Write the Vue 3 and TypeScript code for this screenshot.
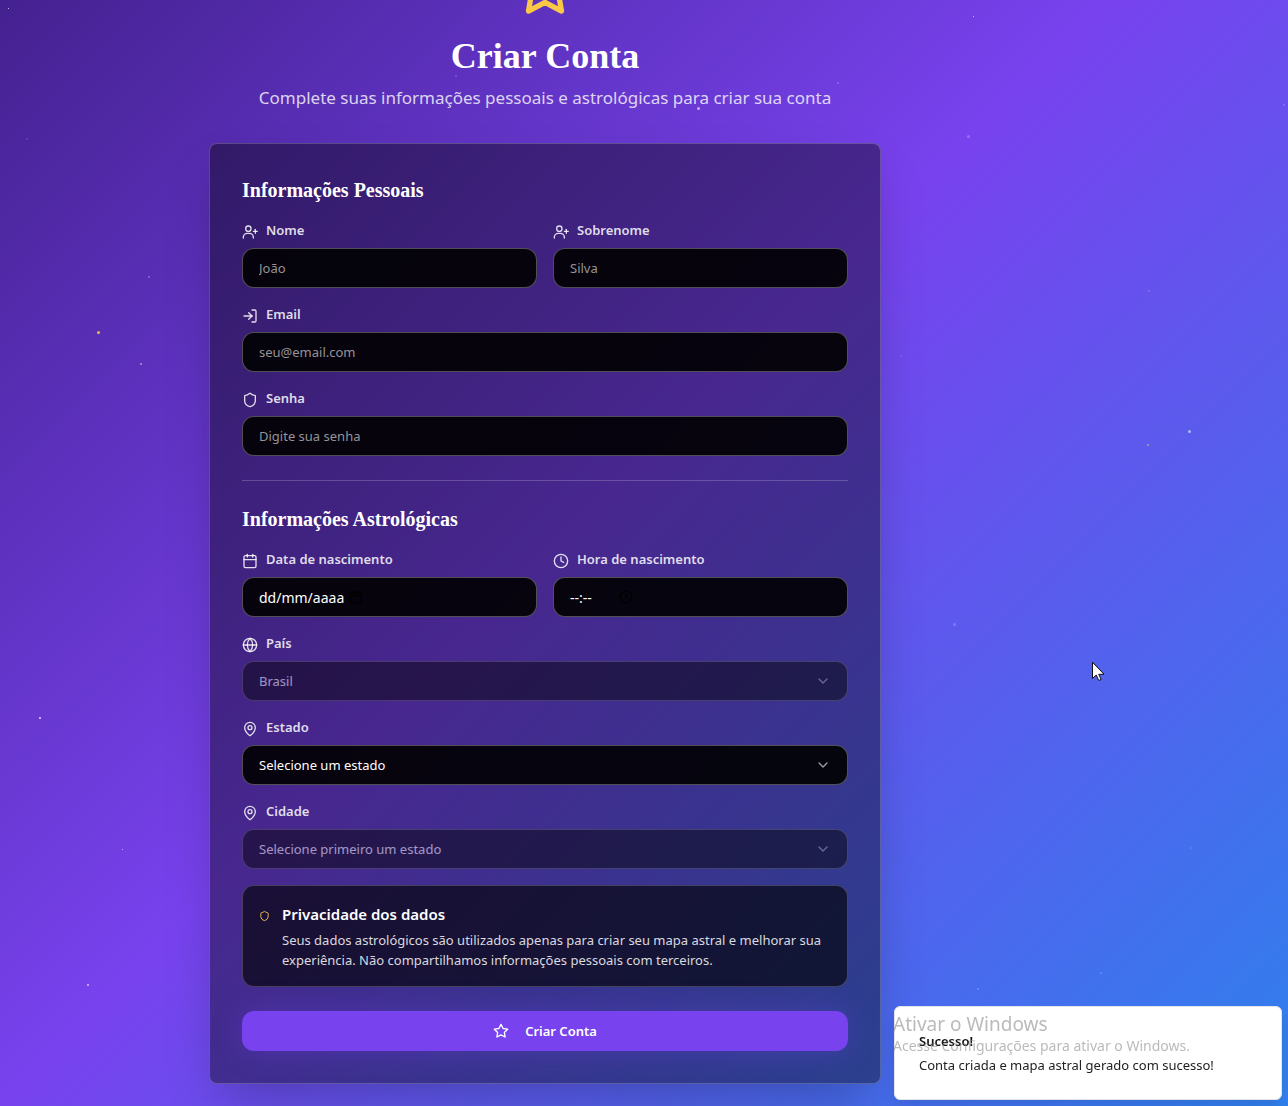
<script setup lang="ts">
import { reactive } from 'vue'

interface Star {
  x: number
  y: number
  size: number
  opacity: number
  gold?: boolean
}

type IconName =
  | 'userPlus'
  | 'logIn'
  | 'shield'
  | 'calendar'
  | 'clock'
  | 'globe'
  | 'pin'

interface Field {
  id: string
  label: string
  icon: IconName
  kind: 'text' | 'email' | 'password' | 'date' | 'time' | 'select'
  placeholder: string
  half?: boolean
  disabled?: boolean
}

const stars: Star[] = [
  { x: 8, y: 8, size: 1, opacity: 0.9 },
  { x: 26, y: 138, size: 2, opacity: 0.15 },
  { x: 148, y: 276, size: 2, opacity: 0.3 },
  { x: 97, y: 331, size: 3, opacity: 0.9, gold: true },
  { x: 140, y: 363, size: 2, opacity: 0.5 },
  { x: 39, y: 717, size: 2, opacity: 0.8 },
  { x: 122, y: 849, size: 1, opacity: 0.7 },
  { x: 87, y: 984, size: 2, opacity: 0.7 },
  { x: 455, y: 75, size: 2, opacity: 0.2 },
  { x: 697, y: 107, size: 3, opacity: 0.6 },
  { x: 837, y: 82, size: 2, opacity: 0.2 },
  { x: 973, y: 16, size: 1, opacity: 0.8 },
  { x: 967, y: 135, size: 3, opacity: 0.25 },
  { x: 1283, y: 104, size: 2, opacity: 0.2 },
  { x: 1148, y: 290, size: 2, opacity: 0.2 },
  { x: 900, y: 355, size: 2, opacity: 0.15 },
  { x: 1188, y: 430, size: 3, opacity: 0.55 },
  { x: 1147, y: 444, size: 2, opacity: 0.6, gold: true },
  { x: 953, y: 623, size: 3, opacity: 0.2 },
  { x: 1190, y: 847, size: 2, opacity: 0.12 },
  { x: 1100, y: 972, size: 2, opacity: 0.2 },
  { x: 977, y: 988, size: 2, opacity: 0.25 },
]

const icons: Record<IconName, string[]> = {
  userPlus: ['M2 21v-1a6 6 0 0 1 6-6h3a6 6 0 0 1 6 6v1', 'M13.500 7a4 4 0 1 1-8 0a4 4 0 1 1 8 0', 'M20 8v6', 'M23 11h-6'],
  logIn: ['M15 3h4a2 2 0 0 1 2 2v14a2 2 0 0 1-2 2h-4', 'M10 17l5-5l-5-5', 'M15 12H3'],
  shield: [
    'M20 13c0 5-3.5 7.5-7.66 8.95a1 1 0 0 1-.67-.01C7.5 20.5 4 18 4 13V6a1 1 0 0 1 1-1c2 0 4.5-1.2 6.24-2.72a1.17 1.17 0 0 1 1.52 0C14.51 3.81 17 5 19 5a1 1 0 0 1 1 1z',
  ],
  calendar: ['M8 2v4', 'M16 2v4', 'M5 4h14a2 2 0 0 1 2 2v14a2 2 0 0 1-2 2H5a2 2 0 0 1-2-2V6a2 2 0 0 1 2-2z', 'M3 10h18'],
  clock: ['M22 12a10 10 0 1 1-20 0a10 10 0 1 1 20 0', 'M12 6v6l4 2'],
  globe: ['M22 12a10 10 0 1 1-20 0a10 10 0 1 1 20 0', 'M12 2a14.5 14.5 0 0 0 0 20a14.5 14.5 0 0 0 0-20', 'M2 12h20'],
  pin: [
    'M20 10c0 4.993-5.539 10.193-7.399 11.799a1 1 0 0 1-1.202 0C9.539 20.193 4 14.993 4 10a8 8 0 0 1 16 0',
    'M15 10a3 3 0 1 1-6 0a3 3 0 1 1 6 0',
  ],
}

const starPath =
  'M12 2l3.090 6.260L22 9.270l-5 4.870l1.180 6.880L12 17.770l-6.180 3.250L7 14.140L2 9.270l6.910-1.010z'

const personal: Field[] = [
  { id: 'nome', label: 'Nome', icon: 'userPlus', kind: 'text', placeholder: 'João', half: true },
  { id: 'sobrenome', label: 'Sobrenome', icon: 'userPlus', kind: 'text', placeholder: 'Silva', half: true },
  { id: 'email', label: 'Email', icon: 'logIn', kind: 'email', placeholder: 'seu@email.com' },
  { id: 'senha', label: 'Senha', icon: 'shield', kind: 'password', placeholder: 'Digite sua senha' },
]

const astro: Field[] = [
  { id: 'data', label: 'Data de nascimento', icon: 'calendar', kind: 'date', placeholder: 'dd/mm/aaaa', half: true },
  { id: 'hora', label: 'Hora de nascimento', icon: 'clock', kind: 'time', placeholder: '--:--', half: true },
  { id: 'pais', label: 'País', icon: 'globe', kind: 'select', placeholder: 'Brasil', disabled: true },
  { id: 'estado', label: 'Estado', icon: 'pin', kind: 'select', placeholder: 'Selecione um estado' },
  { id: 'cidade', label: 'Cidade', icon: 'pin', kind: 'select', placeholder: 'Selecione primeiro um estado', disabled: true },
]

const sections = [
  { title: 'Informações Pessoais', fields: personal },
  { title: 'Informações Astrológicas', fields: astro },
]

const form = reactive<Record<string, string>>({
  nome: '',
  sobrenome: '',
  email: '',
  senha: '',
  data: '',
  hora: '',
  pais: '',
  estado: '',
  cidade: '',
})

function isPicker(field: Field): boolean {
  return field.kind === 'date' || field.kind === 'time'
}

function inputType(field: Field): string {
  return isPicker(field) ? 'text' : field.kind
}
</script>

<template>
  <div class="page">
    <div class="sky" aria-hidden="true">
      <span
        v-for="(s, i) in stars"
        :key="i"
        class="dot"
        :class="{ gold: s.gold }"
        :style="{ left: s.x + 'px', top: s.y + 'px', width: s.size + 'px', height: s.size + 'px', opacity: s.opacity }"
      />
    </div>

    <main class="content">
      <header class="header">
        <svg class="logo" viewBox="0 0 24 24"><path :d="starPath" /></svg>
        <h1>Criar Conta</h1>
        <p>Complete suas informações pessoais e astrológicas para criar sua conta</p>
      </header>

      <form class="card" @submit.prevent>
        <section v-for="sec in sections" :key="sec.title" class="section">
          <h2>{{ sec.title }}</h2>
          <div class="grid">
            <div v-for="f in sec.fields" :key="f.id" class="field" :class="{ half: f.half }">
              <label :for="f.id">
                <svg class="icon" viewBox="0 0 24 24"><path v-for="d in icons[f.icon]" :key="d" :d="d" /></svg>
                {{ f.label }}
              </label>
              <div v-if="f.kind === 'select'" class="control" :class="{ disabled: f.disabled }">
                <select :id="f.id" v-model="form[f.id]" :disabled="f.disabled">
                  <option value="">{{ f.placeholder }}</option>
                </select>
                <svg class="chevron" viewBox="0 0 24 24"><path d="M6 9l6 6l6-6" /></svg>
              </div>
              <div v-else class="control" :class="f.kind">
                <input
                  :id="f.id"
                  v-model="form[f.id]"
                  :type="inputType(f)"
                  :placeholder="f.placeholder"
                  :class="{ picker: isPicker(f) }"
                />
                <svg v-if="isPicker(f)" class="picker-icon" viewBox="0 0 24 24">
                  <path v-for="d in icons[f.icon]" :key="d" :d="d" />
                  <path v-if="f.kind === 'date'" d="M3 7h18" />
                </svg>
              </div>
            </div>
          </div>
        </section>

        <aside class="privacy">
          <svg class="privacy-icon" viewBox="0 0 24 24"><path :d="icons.shield[0]" /></svg>
          <div>
            <h3>Privacidade dos dados</h3>
            <p>
              Seus dados astrológicos são utilizados apenas para criar seu mapa astral e melhorar sua
              experiência. Não compartilhamos informações pessoais com terceiros.
            </p>
          </div>
        </aside>

        <button type="submit" class="submit">
          <svg class="icon" viewBox="0 0 24 24"><path :d="starPath" /></svg>
          Criar Conta
        </button>
      </form>
    </main>

    <div class="toast" role="status">
      <strong>Sucesso!</strong>
      <span>Conta criada e mapa astral gerado com sucesso!</span>
    </div>
    <div class="watermark">
      <div class="watermark-title">Ativar o Windows</div>
      <div class="watermark-text">Acesse Configurações para ativar o Windows.</div>
    </div>

    <svg class="cursor" viewBox="0 0 12 19" aria-hidden="true">
      <path d="M.5.5v16l3.700-3.500l2.600 5.500l2.300-1l-2.400-5.200h5z" />
    </svg>
  </div>
</template>

<style>
body {
  margin: 0;
}
</style>

<style scoped>
.page {
  position: relative;
  box-sizing: border-box;
  min-height: 100vh;
  overflow: hidden;
  padding: 0 198px 22px 0;
  background: linear-gradient(135deg, #442190 0%, #7842ee 46%, #2f80ed 100%);
  color: #fff;
  font-family: 'Segoe UI', 'Noto Sans', 'Open Sans', sans-serif;
  font-size: 13px;
  line-height: 20px;
}

.page *,
.page *::before {
  box-sizing: border-box;
}

h1,
h2,
h3,
p {
  margin: 0;
}

svg {
  display: block;
  flex: none;
  fill: none;
  stroke: currentColor;
  stroke-width: 2;
  stroke-linecap: round;
  stroke-linejoin: round;
}

.sky {
  position: absolute;
  inset: 0;
  pointer-events: none;
}

.dot {
  position: absolute;
  border-radius: 50%;
  background: #fff;
}

.dot.gold {
  background: #f9c846;
}

.content {
  position: relative;
  max-width: 672px;
  margin: -45px auto 0;
}

.header {
  display: flex;
  flex-direction: column;
  align-items: center;
  margin-bottom: 31px;
  text-align: center;
}

.logo {
  width: 64px;
  height: 64px;
  margin-bottom: 17px;
  color: #f9c846;
}

h1,
h2 {
  font-family: 'Liberation Serif', 'Times New Roman', serif;
  font-weight: 700;
}

h1 {
  margin-bottom: 8px;
  font-size: 36px;
  line-height: 40px;
}

.header p {
  color: rgba(255, 255, 255, 0.8);
  font-size: 17px;
  line-height: 28px;
}

.card {
  padding: 32px;
  border: 1px solid rgba(255, 255, 255, 0.2);
  border-radius: 8px;
  background: rgba(0, 0, 0, 0.4);
  box-shadow: 0 25px 50px -12px rgba(0, 0, 0, 0.25);
}

.section + .section {
  margin-top: 24px;
  padding-top: 24px;
  border-top: 1px solid rgba(255, 255, 255, 0.2);
}

h2 {
  margin-bottom: 16px;
  font-size: 20px;
  line-height: 28px;
}

.grid {
  display: grid;
  grid-template-columns: 1fr 1fr;
  gap: 16px;
}

.field {
  grid-column: 1 / -1;
}

.field.half {
  grid-column: auto;
}

label {
  display: flex;
  align-items: flex-end;
  gap: 8px;
  margin-bottom: 8px;
  color: rgba(255, 255, 255, 0.85);
  font-weight: 600;
}

.icon {
  width: 16px;
  height: 16px;
}

.control {
  position: relative;
}

.control.disabled {
  opacity: 0.5;
}

input,
select {
  display: block;
  width: 100%;
  height: 40px;
  margin: 0;
  padding: 0 16px;
  border: 1px solid rgba(255, 255, 255, 0.3);
  border-radius: 12px;
  outline: none;
  background: rgba(0, 0, 0, 0.9);
  color: #fff;
  font: inherit;
  appearance: none;
}

select:disabled {
  opacity: 1;
}

input::placeholder {
  color: #969498;
  opacity: 1;
}

input.picker {
  font-size: 14px;
}

input.picker::placeholder {
  color: #fff;
}

.chevron {
  position: absolute;
  top: 12px;
  right: 17px;
  width: 16px;
  height: 16px;
  opacity: 0.6;
  pointer-events: none;
}

.picker-icon {
  position: absolute;
  top: 13px;
  left: 107px;
  width: 14px;
  height: 14px;
  color: #000;
}

.time .picker-icon {
  left: 66px;
}

.privacy {
  display: flex;
  align-items: flex-start;
  gap: 12px;
  margin: 16px 0 24px;
  padding: 16px;
  border: 1px solid rgba(255, 255, 255, 0.2);
  border-radius: 12px;
  background: rgba(0, 0, 0, 0.62);
}

.privacy-icon {
  width: 11px;
  height: 20px;
  margin-top: 4px;
  color: #f9c846;
}

h3 {
  margin-bottom: 4px;
  font-size: 15px;
  font-weight: 600;
  line-height: 24px;
}

.privacy p {
  color: rgba(255, 255, 255, 0.85);
}

.submit {
  display: flex;
  align-items: center;
  justify-content: center;
  gap: 16px;
  width: 100%;
  height: 40px;
  padding: 0 16px;
  border: 0;
  border-radius: 12px;
  background: #7842ee;
  box-shadow: 0 0 30px rgba(120, 66, 238, 0.3);
  color: #fff;
  font: inherit;
  font-weight: 600;
}

.toast {
  position: fixed;
  right: 6px;
  bottom: 6px;
  display: flex;
  flex-direction: column;
  gap: 4px;
  width: 388px;
  padding: 24px;
  border: 1px solid #e2e4ea;
  border-radius: 6px;
  background: #fff;
  box-shadow: 0 10px 15px -3px rgba(0, 0, 0, 0.1);
  color: #222;
}

.toast strong {
  color: #111;
  font-weight: 600;
}

.watermark {
  position: fixed;
  right: 6px;
  bottom: 50px;
  width: 389px;
  color: rgba(130, 130, 130, 0.55);
  pointer-events: none;
}

.watermark-title {
  font-size: 19px;
  line-height: 24px;
}

.watermark-text {
  font-size: 14px;
  line-height: 20px;
}

.cursor {
  position: absolute;
  top: 662px;
  left: 1092px;
  width: 12px;
  height: 19px;
  fill: #fff;
  stroke: #111;
  stroke-width: 1;
}
</style>
